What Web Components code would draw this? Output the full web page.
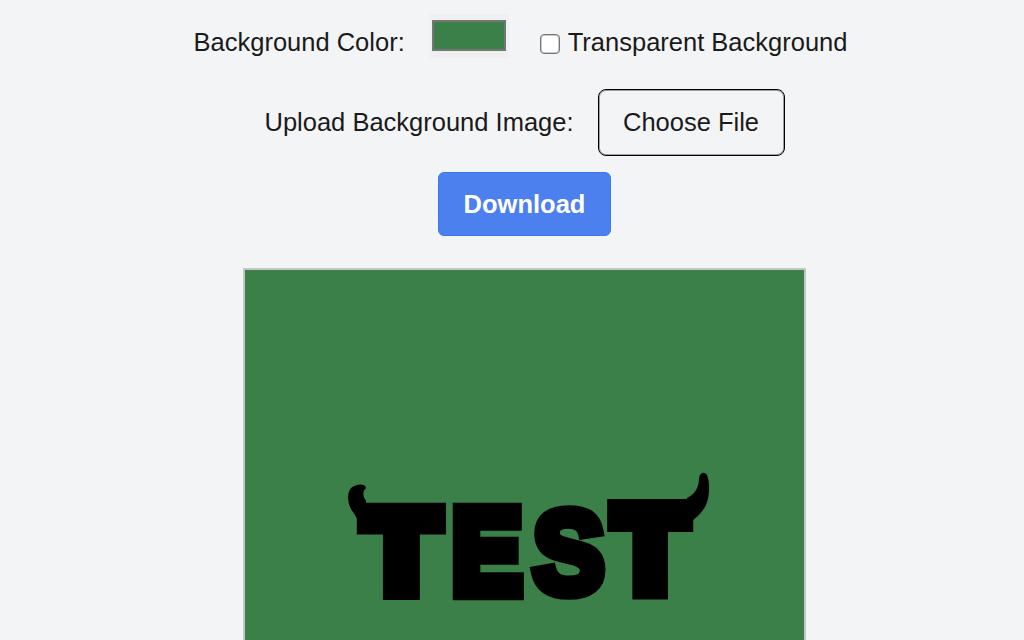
<!DOCTYPE html>
<html>
<head>
<meta charset="utf-8">
<style>
  html, body { margin: 0; height: 100%; overflow: hidden; }
  body { background: #f3f4f6; color: #1a1a1a; font-family: "Liberation Sans", Arial, sans-serif; font-size: 25.5px; }
</style>
</head>
<body>
<logo-app></logo-app>

<script>
class ControlRow extends HTMLElement {
  constructor() {
    super();
    this.attachShadow({ mode: 'open' });
    this.shadowRoot.innerHTML = `
      <style>
        :host { display: flex; justify-content: center; align-items: center; }
      </style>
      <slot></slot>
    `;
  }
}

class ColorControl extends HTMLElement {
  constructor() {
    super();
    this.attachShadow({ mode: 'open' });
    this.shadowRoot.innerHTML = `
      <style>
        :host { display: flex; align-items: center; }
        input {
          appearance: none; -webkit-appearance: none;
          box-sizing: border-box;
          width: 80px; height: 44px;
          margin: 0 0 0 24px;
          padding: 0;
          background: #f0f0f0;
          border: 0;
          position: relative;
          top: -6px;
        }
        input::-webkit-color-swatch-wrapper { padding: 6px 3px 7px 3px; }
        input::-webkit-color-swatch { border: 2px solid #757575; border-radius: 0; }
      </style>
      <span>Background Color:</span>
      <input type="color" value="#3a8048">
    `;
  }
}

class TransparentControl extends HTMLElement {
  constructor() {
    super();
    this.attachShadow({ mode: 'open' });
    this.shadowRoot.innerHTML = `
      <style>
        :host { display: flex; align-items: center; margin-left: 31px; }
        input {
          appearance: none; -webkit-appearance: none;
          box-sizing: border-box;
          width: 20px; height: 20px;
          margin: 4px 8px 0 0;
          background: #fff;
          border: 1px solid #767676;
          box-shadow: inset 0 0 0 1px rgba(118,118,118,.4);
          border-radius: 4px;
        }
      </style>
      <input type="checkbox">
      <span>Transparent Background</span>
    `;
  }
}

class FileControl extends HTMLElement {
  constructor() {
    super();
    this.attachShadow({ mode: 'open' });
    this.shadowRoot.innerHTML = `
      <style>
        :host { display: flex; align-items: center; gap: 24px; }
        button {
          box-sizing: border-box;
          width: 187px; height: 67px;
          background: transparent;
          border: 1px solid #000;
          box-shadow: inset 0 0 0 1px rgba(0,0,0,.35);
          border-radius: 8px;
          color: inherit;
          font: inherit;
          padding: 0;
        }
      </style>
      <span>Upload Background Image:</span>
      <button type="button">Choose File</button>
    `;
  }
}

class DownloadButton extends HTMLElement {
  constructor() {
    super();
    this.attachShadow({ mode: 'open' });
    this.shadowRoot.innerHTML = `
      <style>
        :host { display: block; }
        button {
          box-sizing: border-box;
          width: 173px; height: 64px;
          background: #4d80ef;
          border: 1px solid #3f78ee;
          border-radius: 6px;
          color: #fff;
          font: bold 25.5px "Liberation Sans", Arial, sans-serif;
          padding: 0;
        }
      </style>
      <button type="button"><slot></slot></button>
    `;
  }
}

class LogoPreview extends HTMLElement {
  constructor() {
    super();
    this.attachShadow({ mode: 'open' });
    this.shadowRoot.innerHTML = `
      <style>
        :host {
          display: block;
          box-sizing: border-box;
          width: 563px; height: 500px;
          background: #3a8048;
          border: 2px solid #c4c6c6;
          border-bottom: 0;
        }
        svg { display: block; }
        text { font-family: "Liberation Sans", Arial, sans-serif; font-weight: 700; font-size: 100px; fill: #000; stroke: #000; stroke-linejoin: miter; }
      </style>
      <!-- viewBox is in page pixels so the letters can be read straight off the reference -->
      <svg width="559" height="498" viewBox="245 270 559 498">
        <text transform="translate(365.6 590.4) scale(1.176 1.13)" stroke-width="17">T</text>
        <text transform="translate(452 592.8) scale(1.045 1.196)" stroke-width="12">E</text>
        <text transform="translate(533 592.7) scale(1.07 1.17)" stroke-width="10">S</text>
        <text transform="translate(615.4 590.1) scale(1.135 1.164)" stroke-width="17">T</text>
        <path d="M366 501 C363 496 362 492 366 488 C365 483 356 484 351 488 C346 494 348 506 353 512 L358 520 L358 533 L366 533 Z" fill="#000"/>
        <path d="M687 498 C696 494 699 486 699 478 C700 473 704 471 707 475 C710 482 710 496 706 505 C702 513 697 517 692 521 L692 529 L680 529 Z" fill="#000"/>
      </svg>
    `;
  }
}

class LogoApp extends HTMLElement {
  constructor() {
    super();
    this.attachShadow({ mode: 'open' });
    this.shadowRoot.innerHTML = `
      <style>
        :host { display: block; padding-left: 25px; }
        .first { box-sizing: border-box; height: 89px; padding: 0 8px 5px 0; }
        .action { margin-top: 16px; }
        logo-preview { margin: 32px auto 0; }
      </style>
      <control-row class="first">
        <color-control></color-control>
        <transparent-control></transparent-control>
      </control-row>
      <control-row><file-control></file-control></control-row>
      <control-row class="action"><download-button>Download</download-button></control-row>
      <logo-preview></logo-preview>
    `;
  }
}

customElements.define('control-row', ControlRow);
customElements.define('color-control', ColorControl);
customElements.define('transparent-control', TransparentControl);
customElements.define('file-control', FileControl);
customElements.define('download-button', DownloadButton);
customElements.define('logo-preview', LogoPreview);
customElements.define('logo-app', LogoApp);
</script>
</body>
</html>
